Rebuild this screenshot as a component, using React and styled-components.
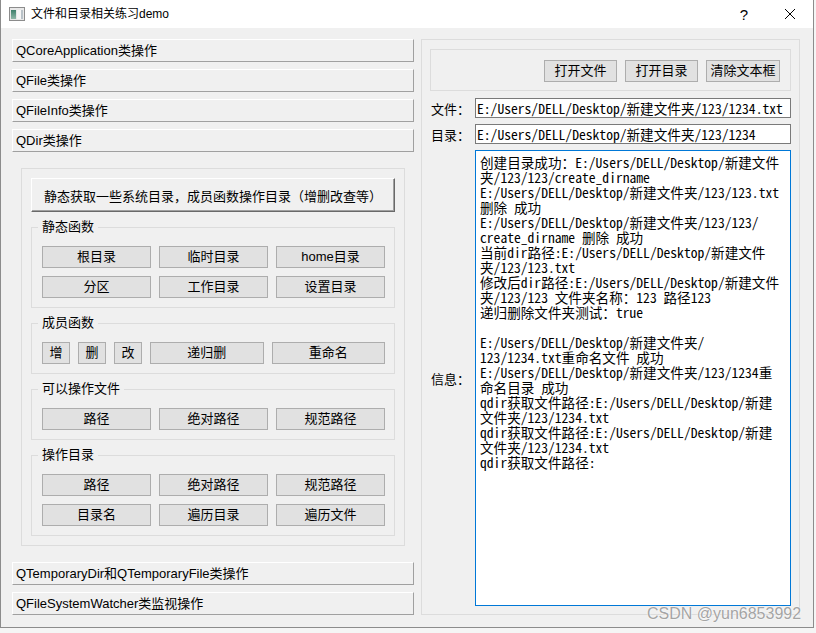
import React from "react";
import styled, { createGlobalStyle } from "styled-components";

const uiFont = `"Liberation Sans", "Noto Sans CJK SC", sans-serif`;
const monoFont = `"Noto Sans Mono CJK SC", "Noto Sans CJK SC", monospace`;

const GlobalStyle = createGlobalStyle`
  html, body {
    margin: 0;
    padding: 0;
  }
  body {
    width: 816px;
    height: 633px;
    overflow: hidden;
    background: #f5f5f5;
    font-family: ${uiFont};
    font-size: 13px;
    color: #000;
  }
  * {
    box-sizing: border-box;
  }
`;

const Screen = styled.div`
  position: relative;
  width: 816px;
  height: 633px;
`;

const Window = styled.div`
  width: 814px;
  height: 628px;
  background: #f0f0f0;
  border: 1px solid #8c8c8c;
  border-top: none;
  display: flex;
  flex-direction: column;
`;

const TitleBar = styled.div`
  height: 28px;
  flex-shrink: 0;
  background: #fff;
  display: flex;
  align-items: center;
  padding-left: 8px;
`;

const TitleText = styled.span`
  flex: 1;
  margin-left: 6px;
  font-size: 12px;
  line-height: 16px;
`;

const CaptionButton = styled.div`
  width: 46px;
  height: 28px;
  display: flex;
  align-items: center;
  justify-content: center;
  font-size: 15px;
  font-family: "Liberation Sans", sans-serif;
`;

const Body = styled.div`
  flex: 1;
  display: flex;
  gap: 7px;
  padding: 11px 0 0 11px;
`;

const LeftColumn = styled.div`
  width: 402px;
  display: flex;
  flex-direction: column;
`;

const ToolTab = styled.div`
  height: 23px;
  background: #f0f0f0;
  border-top: 1px solid #fff;
  border-left: 1px solid #fff;
  border-right: 1px solid #a0a0a0;
  border-bottom: 1px solid #a0a0a0;
  padding-left: 3px;
  font-size: 13px;
  line-height: 21px;
  white-space: nowrap;

  & + & {
    margin-top: 7px;
  }
`;

const PageFrame = styled.div`
  height: 378px;
  margin: 16px 9px;
  border: 1px solid #dcdcdc;
  padding: 9px 9px 0 9px;
`;

const BigButton = styled.div`
  height: 34px;
  background: #f0f0f0;
  border-top: 1px solid #fff;
  border-left: 1px solid #fff;
  border-right: 1px solid #696969;
  border-bottom: 1px solid #696969;
  box-shadow: inset -1px -1px 0 #a0a0a0;
  display: flex;
  align-items: center;
  justify-content: center;
  font-size: 13px;
`;

const Group = styled.fieldset`
  margin: 7px 0 0;
  padding: 11px 9px 9px 10px;
  border: 1px solid #dcdcdc;
  min-width: 0;
`;

const Legend = styled.legend`
  padding: 0 4px;
  margin-left: -4px;
  font-size: 13px;
  line-height: 16px;
`;

const ButtonGrid = styled.div`
  display: grid;
  grid-template-columns: repeat(3, 1fr);
  gap: 8px;
`;

const ButtonRow = styled.div`
  display: flex;
  gap: 8px;
`;

const Button = styled.div`
  height: 22px;
  ${(p) => (p.$w ? `width: ${p.$w}px; flex-shrink: 0;` : "flex: 1;")}
  background: #e1e1e1;
  border: 1px solid #adadad;
  font-size: 13px;
  line-height: 20px;
  text-align: center;
  white-space: nowrap;
`;

const RightFrame = styled.div`
  width: 379px;
  height: 576px;
  border: 1px solid #dcdcdc;
  padding: 9px 8px 8px 8px;
  display: flex;
  flex-direction: column;
`;

const ButtonBar = styled.div`
  height: 42px;
  flex-shrink: 0;
  border: 1px solid #dcdcdc;
  display: flex;
  justify-content: flex-end;
  align-items: flex-start;
  gap: 8px;
  padding: 10px 10px 0 0;
`;

const Form = styled.div`
  flex: 1;
  margin-top: 7px;
  display: grid;
  grid-template-columns: 45px 1fr;
  grid-template-rows: 20px 20px 1fr;
  row-gap: 6px;
`;

const FieldLabel = styled.div`
  padding-left: 1px;
  display: flex;
  align-items: center;
  font-size: 13px;
  white-space: nowrap;
`;

const LineEdit = styled.div`
  background: #fff;
  border: 1px solid #7a7a7a;
  padding-left: 1px;
  font-family: ${monoFont};
  font-size: 13.6px;
  line-height: 18px;
  white-space: pre;
  overflow: hidden;
`;

const TextEdit = styled.div`
  background: #fff;
  border: 1px solid #0078d7;
  padding: 4px 0 0 4px;
  font-family: ${monoFont};
  font-size: 13.6px;
  line-height: 15px;
  overflow: hidden;
`;

const TextLine = styled.div`
  height: 15px;
  white-space: pre;
`;

const Watermark = styled.div`
  position: absolute;
  left: 647px;
  top: 605px;
  font-family: "Liberation Sans", sans-serif;
  font-size: 16px;
  line-height: 18px;
  color: #a4a4a4;
  text-shadow: 0 0 2px #fff, 0 0 1px #fff;
`;

function AppIcon() {
  return (
    <svg width="16" height="14" viewBox="0 0 16 14">
      <defs>
        <linearGradient id="ic" x1="0" y1="0" x2="0" y2="1">
          <stop offset="0" stopColor="#3d7f6b" />
          <stop offset="1" stopColor="#8fb8a8" />
        </linearGradient>
      </defs>
      <rect x="0.5" y="0.5" width="15" height="13" fill="#e8e8e8" stroke="#8c8c8c" />
      <rect x="2" y="3" width="5" height="9" fill="url(#ic)" />
      <rect x="8" y="3" width="6" height="9" fill="#f6f6f6" />
      <rect x="12" y="3" width="2" height="9" fill="#b9c2c8" />
    </svg>
  );
}

function CloseIcon() {
  return (
    <svg width="12" height="12" viewBox="0 0 12 12">
      <path d="M1 1 L11 11 M11 1 L1 11" stroke="#000" strokeWidth="1" fill="none" />
    </svg>
  );
}

const logLines = [
  "创建目录成功：E:/Users/DELL/Desktop/新建文件",
  "夹/123/123/create_dirname",
  "E:/Users/DELL/Desktop/新建文件夹/123/123.txt",
  "删除 成功",
  "E:/Users/DELL/Desktop/新建文件夹/123/123/",
  "create_dirname 删除 成功",
  "当前dir路径:E:/Users/DELL/Desktop/新建文件",
  "夹/123/123.txt",
  "修改后dir路径:E:/Users/DELL/Desktop/新建文件",
  "夹/123/123 文件夹名称：123 路径123",
  "递归删除文件夹测试：true",
  "",
  "E:/Users/DELL/Desktop/新建文件夹/",
  "123/1234.txt重命名文件 成功",
  "E:/Users/DELL/Desktop/新建文件夹/123/1234重",
  "命名目录 成功",
  "qdir获取文件路径:E:/Users/DELL/Desktop/新建",
  "文件夹/123/1234.txt",
  "qdir获取文件路径:E:/Users/DELL/Desktop/新建",
  "文件夹/123/1234.txt",
  "qdir获取文件路径:",
];

export default function App() {
  return (
    <Screen>
      <GlobalStyle />
      <Window>
        <TitleBar>
          <AppIcon />
          <TitleText>文件和目录相关练习demo</TitleText>
          <CaptionButton>?</CaptionButton>
          <CaptionButton>
            <CloseIcon />
          </CaptionButton>
        </TitleBar>
        <Body>
          <LeftColumn>
            <ToolTab>QCoreApplication类操作</ToolTab>
            <ToolTab>QFile类操作</ToolTab>
            <ToolTab>QFileInfo类操作</ToolTab>
            <ToolTab>QDir类操作</ToolTab>
            <PageFrame>
              <BigButton>静态获取一些系统目录，成员函数操作目录（增删改查等）</BigButton>
              <Group>
                <Legend>静态函数</Legend>
                <ButtonGrid>
                  <Button>根目录</Button>
                  <Button>临时目录</Button>
                  <Button>home目录</Button>
                  <Button>分区</Button>
                  <Button>工作目录</Button>
                  <Button>设置目录</Button>
                </ButtonGrid>
              </Group>
              <Group>
                <Legend>成员函数</Legend>
                <ButtonRow>
                  <Button $w={28}>增</Button>
                  <Button $w={28}>删</Button>
                  <Button $w={28}>改</Button>
                  <Button>递归删</Button>
                  <Button>重命名</Button>
                </ButtonRow>
              </Group>
              <Group>
                <Legend>可以操作文件</Legend>
                <ButtonGrid>
                  <Button>路径</Button>
                  <Button>绝对路径</Button>
                  <Button>规范路径</Button>
                </ButtonGrid>
              </Group>
              <Group>
                <Legend>操作目录</Legend>
                <ButtonGrid>
                  <Button>路径</Button>
                  <Button>绝对路径</Button>
                  <Button>规范路径</Button>
                  <Button>目录名</Button>
                  <Button>遍历目录</Button>
                  <Button>遍历文件</Button>
                </ButtonGrid>
              </Group>
            </PageFrame>
            <ToolTab>QTemporaryDir和QTemporaryFile类操作</ToolTab>
            <ToolTab>QFileSystemWatcher类监视操作</ToolTab>
          </LeftColumn>
          <RightFrame>
            <ButtonBar>
              <Button $w={73}>打开文件</Button>
              <Button $w={73}>打开目录</Button>
              <Button $w={74}>清除文本框</Button>
            </ButtonBar>
            <Form>
              <FieldLabel>文件：</FieldLabel>
              <LineEdit>E:/Users/DELL/Desktop/新建文件夹/123/1234.txt</LineEdit>
              <FieldLabel>目录：</FieldLabel>
              <LineEdit>E:/Users/DELL/Desktop/新建文件夹/123/1234</LineEdit>
              <FieldLabel>信息：</FieldLabel>
              <TextEdit>
                {logLines.map((line, i) => (
                  <TextLine key={i}>{line}</TextLine>
                ))}
              </TextEdit>
            </Form>
          </RightFrame>
        </Body>
      </Window>
      <Watermark>CSDN @yun6853992</Watermark>
    </Screen>
  );
}
